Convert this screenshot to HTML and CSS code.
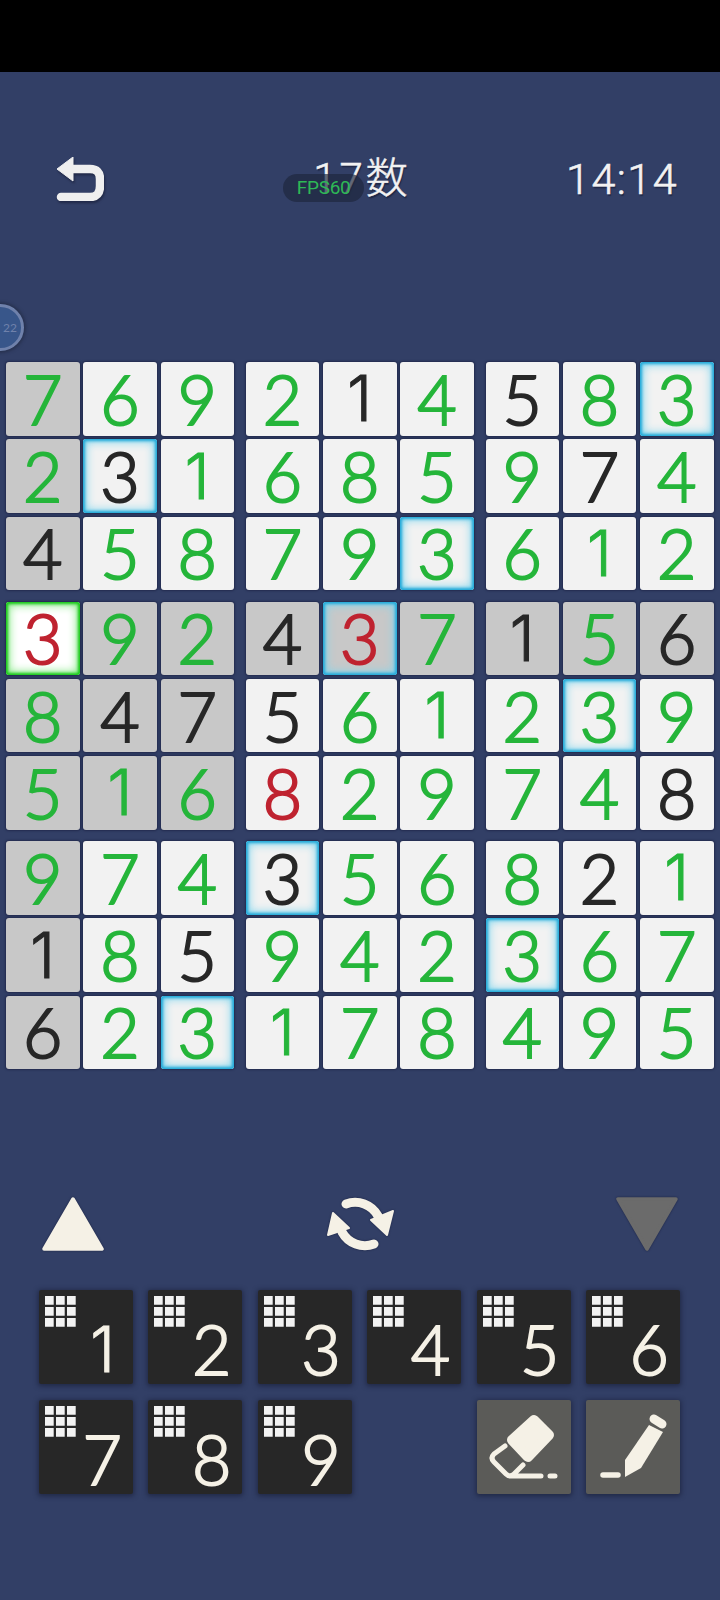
FILE: index.html
```html
<!DOCTYPE html>
<html lang="ja">
<head>
  <meta charset="UTF-8" />
  <meta name="viewport" content="width=device-width, initial-scale=1.0" />
  <title>17数</title>
  <link rel="stylesheet" href="styles.css">
</head>
<body>
  <svg class="defs" width="0" height="0">
    <symbol id="mini" viewBox="0 0 31 31">
      <path d="M0 0h8.7v8.7H0zM11 0h8.7v8.7H11zM22 0h8.7v8.7H22zM0 11h8.7v8.7H0zM11 11h8.7v8.7H11zM22 11h8.7v8.7H22zM0 22h8.7v8.7H0zM11 22h8.7v8.7H11zM22 22h8.7v8.7H22z" fill="#f2f2f2"/>
    </symbol>
  </svg>

  <div class="status-bar"></div>

  <header class="header">
    <svg class="back" width="48" height="44" viewBox="0 0 48 44">
      <path d="M1 12 17 0v24z" fill="#efefef" stroke="#efefef" stroke-width="1" stroke-linejoin="round"/>
      <path d="M15 12H34Q44 12 44 22V29Q44 40 34 40H5" fill="none" stroke="#efefef" stroke-width="8.5" stroke-linecap="round"/>
    </svg>
    <div class="title">
      <span>17数</span>
      <div class="fps">FPS60</div>
    </div>
    <div class="time">14:14</div>
  </header>

  <div class="float-ball">22</div>

  <main class="board">
    <div class="block">
      <div class="cell grey">7</div><div class="cell">6</div><div class="cell">9</div>
      <div class="cell grey">2</div><div class="cell given glow">3</div><div class="cell one">1</div>
      <div class="cell grey given">4</div><div class="cell">5</div><div class="cell">8</div>
    </div>
    <div class="block">
      <div class="cell">2</div><div class="cell given one">1</div><div class="cell">4</div>
      <div class="cell">6</div><div class="cell">8</div><div class="cell">5</div>
      <div class="cell">7</div><div class="cell">9</div><div class="cell glow">3</div>
    </div>
    <div class="block">
      <div class="cell given">5</div><div class="cell">8</div><div class="cell glow">3</div>
      <div class="cell">9</div><div class="cell given">7</div><div class="cell">4</div>
      <div class="cell">6</div><div class="cell one">1</div><div class="cell">2</div>
    </div>
    <div class="block">
      <div class="cell selected wrong">3</div><div class="cell grey">9</div><div class="cell grey">2</div>
      <div class="cell grey">8</div><div class="cell grey given">4</div><div class="cell grey given">7</div>
      <div class="cell grey">5</div><div class="cell grey one">1</div><div class="cell grey">6</div>
    </div>
    <div class="block">
      <div class="cell grey given">4</div><div class="cell grey glow wrong">3</div><div class="cell grey">7</div>
      <div class="cell given">5</div><div class="cell">6</div><div class="cell one">1</div>
      <div class="cell wrong">8</div><div class="cell">2</div><div class="cell">9</div>
    </div>
    <div class="block">
      <div class="cell grey given one">1</div><div class="cell grey">5</div><div class="cell grey given">6</div>
      <div class="cell">2</div><div class="cell glow">3</div><div class="cell">9</div>
      <div class="cell">7</div><div class="cell">4</div><div class="cell given">8</div>
    </div>
    <div class="block">
      <div class="cell grey">9</div><div class="cell">7</div><div class="cell">4</div>
      <div class="cell grey given one">1</div><div class="cell">8</div><div class="cell given">5</div>
      <div class="cell grey given">6</div><div class="cell">2</div><div class="cell glow">3</div>
    </div>
    <div class="block">
      <div class="cell given glow">3</div><div class="cell">5</div><div class="cell">6</div>
      <div class="cell">9</div><div class="cell">4</div><div class="cell">2</div>
      <div class="cell one">1</div><div class="cell">7</div><div class="cell">8</div>
    </div>
    <div class="block">
      <div class="cell">8</div><div class="cell given">2</div><div class="cell one">1</div>
      <div class="cell glow">3</div><div class="cell">6</div><div class="cell">7</div>
      <div class="cell">4</div><div class="cell">9</div><div class="cell">5</div>
    </div>
  </main>

  <div class="controls">
    <svg class="tri" width="62" height="56" viewBox="0 0 62 56">
      <path d="M31 3 60 53H2z" fill="#f5f1e6" stroke="#f5f1e6" stroke-width="3.5" stroke-linejoin="round"/>
    </svg>
    <svg class="sync" width="68" height="56" viewBox="0 0 68 56">
      <path d="M20 8A26 26 0 0 1 52 20" fill="none" stroke="#f5f1e6" stroke-width="9" stroke-linecap="round"/>
      <path d="M67 15 61 39 45 24z" fill="#f5f1e6" stroke="#f5f1e6" stroke-width="2" stroke-linejoin="round"/>
      <path d="M48 48A26 26 0 0 1 16 36" fill="none" stroke="#f5f1e6" stroke-width="9" stroke-linecap="round"/>
      <path d="M7 17 23 32 2 39z" fill="#f5f1e6" stroke="#f5f1e6" stroke-width="2" stroke-linejoin="round"/>
    </svg>
    <svg class="tri" width="62" height="56" viewBox="0 0 62 56">
      <path d="M2 3H60L31 53z" fill="#6b6b6b" stroke="#6b6b6b" stroke-width="3.5" stroke-linejoin="round"/>
    </svg>
  </div>

  <div class="pad">
    <button class="key"><svg class="mini"><use href="#mini"/></svg><span class="one">1</span></button>
    <button class="key"><svg class="mini"><use href="#mini"/></svg><span>2</span></button>
    <button class="key"><svg class="mini"><use href="#mini"/></svg><span>3</span></button>
    <button class="key"><svg class="mini"><use href="#mini"/></svg><span>4</span></button>
    <button class="key"><svg class="mini"><use href="#mini"/></svg><span>5</span></button>
    <button class="key"><svg class="mini"><use href="#mini"/></svg><span>6</span></button>
    <button class="key"><svg class="mini"><use href="#mini"/></svg><span>7</span></button>
    <button class="key"><svg class="mini"><use href="#mini"/></svg><span>8</span></button>
    <button class="key"><svg class="mini"><use href="#mini"/></svg><span>9</span></button>
    <button class="key tool erase">
      <svg width="94" height="94" viewBox="0 0 94 94">
        <path d="M57 20 72 35 51 57 35 40z" fill="#f5f1e6" stroke="#f5f1e6" stroke-width="10" stroke-linejoin="round"/>
        <path d="M28 46 17 54Q13 58 17 62L29 74Q33 78 37 74L46 65M33 76H64M73 76H78" fill="none" stroke="#f5f1e6" stroke-width="5" stroke-linecap="round" stroke-linejoin="round"/>
      </svg>
    </button>
    <button class="key tool">
      <svg width="94" height="94" viewBox="0 0 94 94">
        <path d="M39 77V60L63 25 77 32 55 68z" fill="#f5f1e6"/>
        <path d="M68 19 76 24" fill="none" stroke="#f5f1e6" stroke-width="9" stroke-linecap="round"/>
        <path d="M17 75H32" fill="none" stroke="#f5f1e6" stroke-width="5.5" stroke-linecap="round"/>
      </svg>
    </button>
  </div>
</body>
</html>
```

FILE: styles.css
```css
body {
  margin: 0;
  width: 720px;
  height: 1600px;
  overflow: hidden;
  background-color: #323f66;
  font-family: "Lato", "Noto Sans CJK JP", sans-serif;
}
.defs {
  position: absolute;
}
.status-bar {
  height: 72px;
  background-color: #000;
}

/* header */
.header {
  display: grid;
  grid-template-columns: 1fr auto 1fr;
  align-items: start;
  height: 205px;
  margin-top: 85px;
  padding: 0 42px 0 56px;
  color: #f2f2f2;
}
.back {
  filter: drop-shadow(1px 2px 1px rgba(20, 25, 50, 0.6));
}
.title {
  position: relative;
  margin-top: 4px;
  margin-right: 10px;
  font-family: "Roboto", "Noto Sans CJK JP", sans-serif;
  font-size: 42px;
  font-weight: 300;
  line-height: 36px;
  letter-spacing: 3px;
  -webkit-text-stroke: 0.5px #f2f2f2;
  text-shadow: 1px 2px 1px rgba(20, 25, 50, 0.6);
}
.fps {
  position: absolute;
  left: -30px;
  top: 13px;
  width: 81px;
  height: 28px;
  border-radius: 14px;
  background-color: rgba(30, 38, 60, 0.68);
  color: #2eb856;
  font-size: 19px;
  font-weight: 400;
  line-height: 28px;
  letter-spacing: -0.3px;
  text-align: center;
  text-shadow: none;
  -webkit-text-stroke: 0;
}
.time {
  justify-self: end;
  margin-top: 4px;
  font-family: "Roboto", sans-serif;
  font-size: 43px;
  font-weight: 300;
  line-height: 36px;
  letter-spacing: 1.5px;
  -webkit-text-stroke: 0.6px #f2f2f2;
  text-shadow: 1px 2px 1px rgba(20, 25, 50, 0.6);
}
.float-ball {
  position: absolute;
  left: -23px;
  top: 304px;
  box-sizing: border-box;
  width: 47px;
  height: 47px;
  padding-left: 23px;
  border: 3px solid #6f81ab;
  border-radius: 50%;
  background-color: #38568a;
  box-shadow: 0 0 3px 2px rgba(30, 38, 60, 0.5);
  color: #6f81ab;
  font-size: 12px;
  line-height: 41px;
}

/* board */
.board {
  display: grid;
  grid-template-columns: repeat(3, 228px);
  gap: 11.5px 11.75px;
  margin-left: 6px;
  width: 708px;
}
.block {
  display: grid;
  grid-template-columns: repeat(3, 73.5px);
  grid-auto-rows: 73.5px;
  gap: 3.75px;
}
.cell {
  display: flex;
  align-items: center;
  justify-content: center;
  border-radius: 3px;
  background-color: #f2f2f2;
  box-shadow: 0 0 2px 1px #222b4e;
  color: #25b53a;
  font-size: 68px;
  font-weight: 300;
  line-height: 1;
  -webkit-text-stroke: 2.1px currentColor;
}
.cell.one {
  font-family: "Inter", sans-serif;
  font-size: 63px;
  -webkit-text-stroke: 1px currentColor;
}
.cell.grey {
  background-color: #c8c8c8;
}
.cell.given {
  color: #272727;
}
.cell.wrong {
  color: #bf2330;
}
.cell.glow {
  box-shadow: 0 0 2px 1px #222b4e, inset 0 0 3px 2px #1fa8d8, inset 0 0 10px 3px #7fd6ee;
}
.cell.selected {
  background-color: #fff;
  box-shadow: 0 0 2px 1px #222b4e, inset 0 0 3px 2px #14c814, inset 0 0 10px 3px #80e880;
}

/* arrows + numpad */
.controls {
  display: flex;
  justify-content: space-between;
  align-items: center;
  margin-top: 127px;
  padding: 0 42px;
}
.tri,
.sync {
  filter: drop-shadow(0 0 1px #1c2444);
}
.pad {
  display: grid;
  grid-template-columns: repeat(6, 94px);
  grid-auto-rows: 94px;
  gap: 16px 15.4px;
  margin-top: 38px;
  padding-left: 39px;
}
.key {
  position: relative;
  padding: 0;
  border: none;
  border-radius: 2px;
  background-color: #272727;
  box-shadow: 0 1px 5px 1px rgba(24, 30, 55, 0.7);
  color: #f5f1e6;
  font-family: "Lato", sans-serif;
}
.key span {
  position: absolute;
  right: 11px;
  bottom: 1px;
  font-size: 68px;
  font-weight: 300;
  line-height: 68px;
  -webkit-text-stroke: 1.9px currentColor;
}
.key span.one {
  font-family: "Inter", sans-serif;
  font-size: 63px;
  right: 18px;
  -webkit-text-stroke: 0.8px currentColor;
}
.mini {
  position: absolute;
  left: 6px;
  top: 5.5px;
  width: 31px;
  height: 31px;
}
.key.tool {
  background-color: #5b5b58;
}
.key.tool svg {
  display: block;
}
.key.erase {
  grid-column: 5;
}
```
